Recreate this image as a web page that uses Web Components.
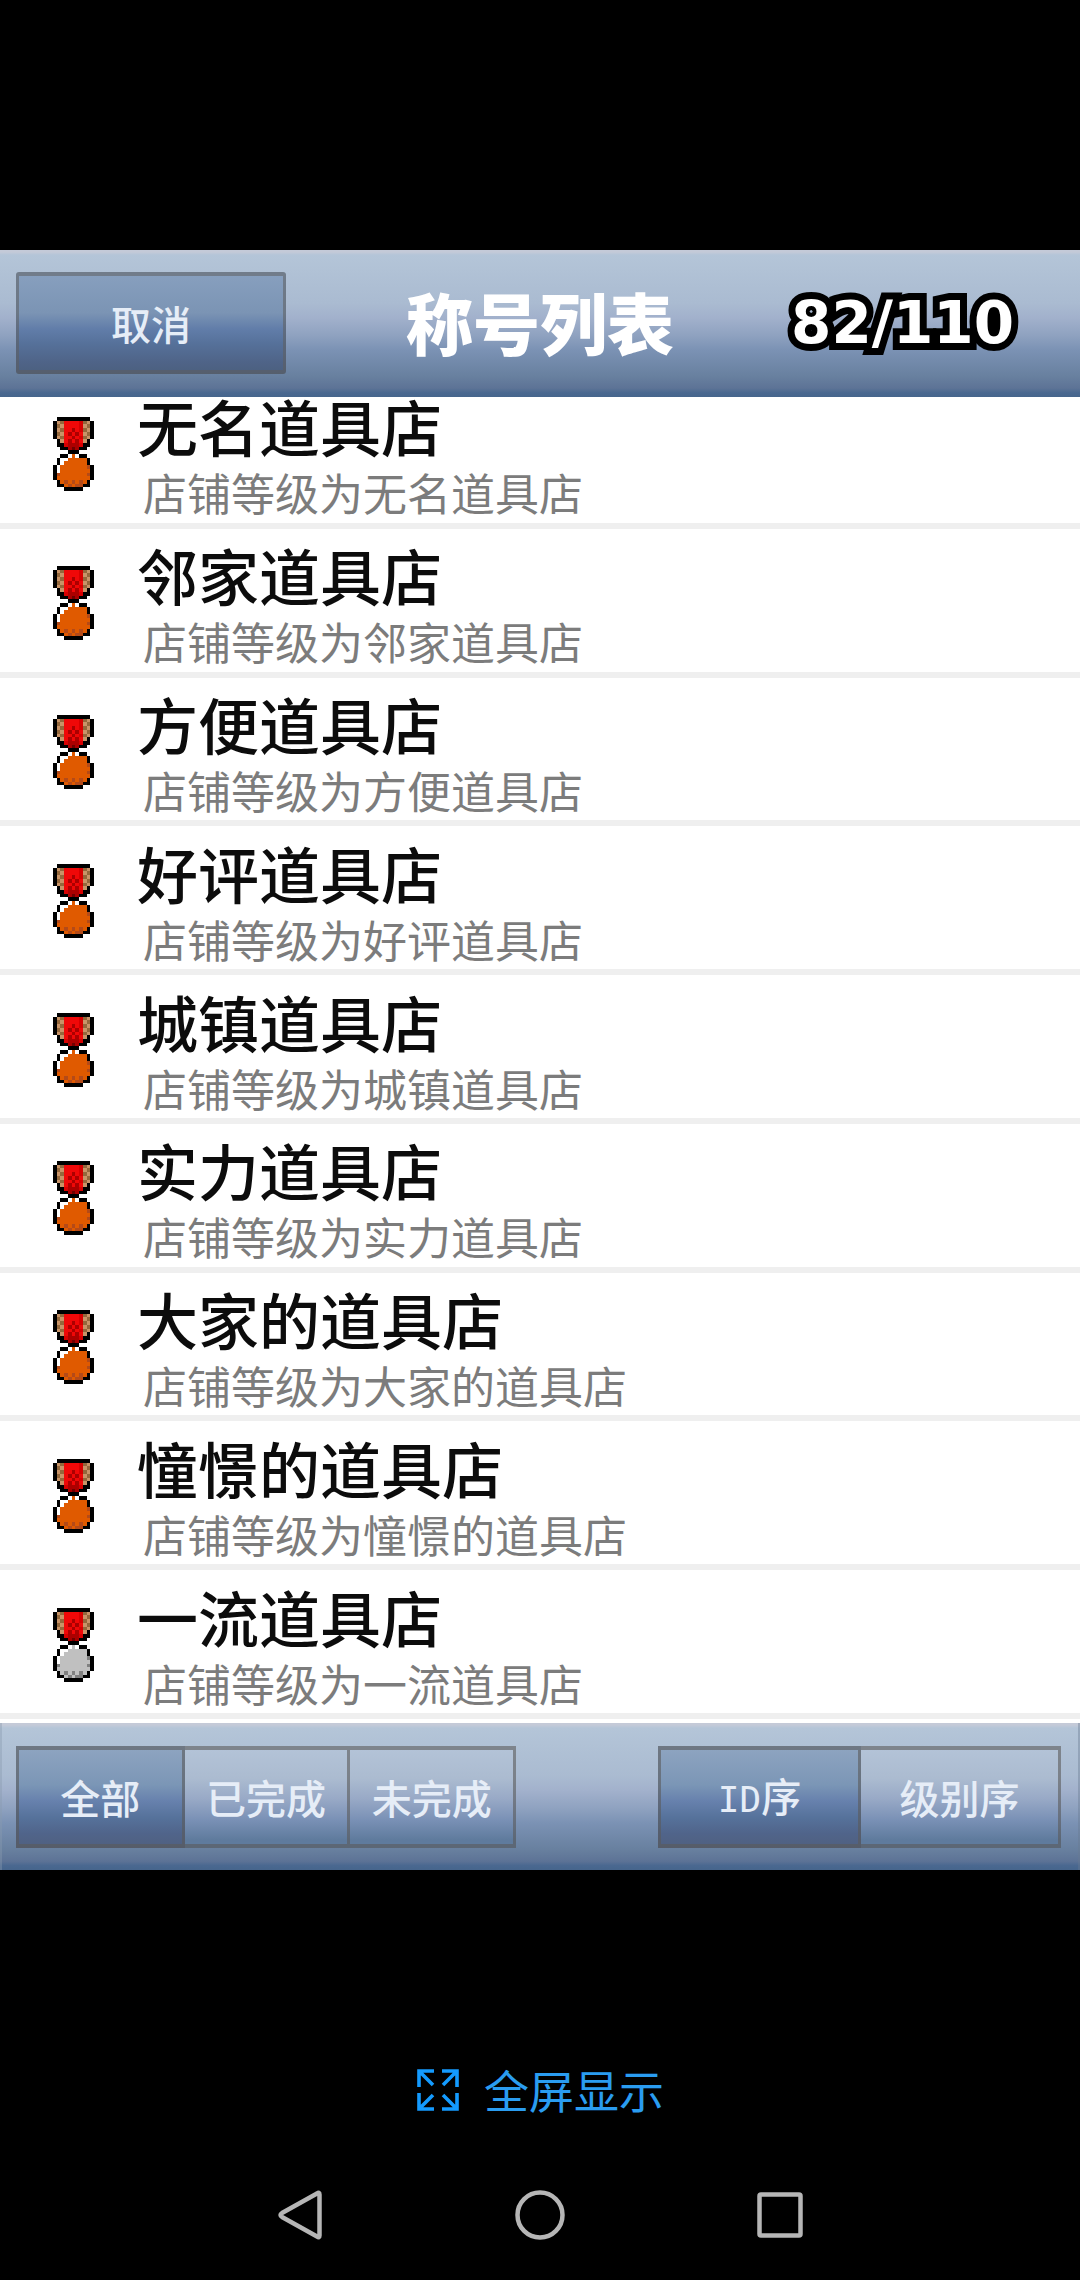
<!DOCTYPE html>
<html lang="zh-CN">
<head>
<meta charset="utf-8">
<meta name="viewport" content="width=device-width, initial-scale=1">
<title>称号列表</title>
<style>
  html, body { margin: 0; height: 100%; background: #000; }
  body { font-family: "Noto Sans CJK SC", "Noto Sans", sans-serif; }
</style>
</head>
<body>
<game-screen>
  <title-bar slot="top" count="82/110">称号列表</title-bar>
  <title-row medal="bronze" name="无名道具店"></title-row>
  <title-row medal="bronze" name="邻家道具店"></title-row>
  <title-row medal="bronze" name="方便道具店"></title-row>
  <title-row medal="bronze" name="好评道具店"></title-row>
  <title-row medal="bronze" name="城镇道具店"></title-row>
  <title-row medal="bronze" name="实力道具店"></title-row>
  <title-row medal="bronze" name="大家的道具店"></title-row>
  <title-row medal="bronze" name="憧憬的道具店"></title-row>
  <title-row medal="silver" name="一流道具店"></title-row>
  <filter-bar slot="bottom"></filter-bar>
  <system-bar slot="system"></system-bar>
</game-screen>

<script>
const BAR = 'linear-gradient(#c4cad8 0 2px, #b4c5d8 5px, #aabbd1 36%, #a2b1cc 46%, #8fa2c0 58%, #7b92b4 68%, #68809f 86%, #5d7396 94%, #4a6890 97%, #46658c)';

const define = (tag, render) => customElements.define(tag, class extends HTMLElement {
  constructor() { super(); this.attachShadow({ mode: 'open' }); }
  connectedCallback() { this.shadowRoot.innerHTML = render(this); }
});

define('game-screen', () => `
  <style>
    :host { display: flex; flex-direction: column; min-height: 100vh; padding-top: 250px; box-sizing: border-box; }
    main { flex: 1; display: flex; flex-direction: column; background: #fff; }
    .list { flex: 1; display: flex; flex-direction: column; overflow: hidden; padding-bottom: 4px; }
    .rows { flex: 1; display: flex; flex-direction: column; margin-top: -17px; }
  </style>
  <main>
    <slot name="top"></slot>
    <div class="list"><div class="rows" role="list"><slot></slot></div></div>
    <slot name="bottom"></slot>
  </main>
  <slot name="system"></slot>`);

define('title-bar', el => `
  <style>
    :host { display: grid; grid-template-columns: 270px 1fr 270px; align-items: center; position: relative; z-index: 1;
            padding: 22px 16px 23px; background: ${BAR}; color: #fff; }
    button { height: 102px; padding: 0; font: 500 40px/60px "Noto Sans CJK SC", sans-serif; color: #e6edf7;
             border: solid rgba(95, 95, 95, .55); border-width: 4px 3px; border-radius: 3px;
             background: linear-gradient(#88a0bf, #7b94b4 40%, #617da9 56%, #56719a 70%, #4f6488 88%, #4b5f7e) border-box; }
    h1 { margin: 0; padding-bottom: 4px; text-align: center; font-size: 67px; line-height: 80px; font-weight: 900; }
    output { justify-self: end; padding-right: 50px; font: bold 58px/80px "DejaVu Sans", sans-serif;
             -webkit-text-stroke: 14px #000; stroke-linejoin: miter; paint-order: stroke fill; }
  </style>
  <button type="button">取消</button>
  <h1><slot></slot></h1>
  <output>${el.getAttribute('count')}</output>`);

/* 11 x 20 pixel sprite */
const SPRITE = [
  '.KKKKKKKKK.',
  'KTBRRRRrBTK',
  'KBTRRRRrTBK',
  'KTBRRDRrBTK',
  'KBTRDRDRTBK',
  'KTBRRDRrBTK',
  '.KTRDRDRTK.',
  '.KKrDDDrKK.',
  '..KKDMDKK..',
  '....KKK....',
  '..KKWOWKK..',
  '.KWWOOOOOK.',
  '.KWOOOOOOK.',
  'KWOOOOOOOPK',
  'KWOOOOOOOOK',
  'KPOOOOOOOPK',
  'KOOOOOOOOOK',
  '.KOPOPOPOK.',
  '.KKOPOPPKK.',
  '...KKKKK...',
];
const BASE = { K: '#000', T: '#c89468', B: '#94683c', R: '#f00808', r: '#d80000', D: '#ac0000', M: '#700000', W: '#fff' };
const METAL = { bronze: { O: '#e05a00', P: '#b44a18' }, silver: { O: '#c0c0c0', P: '#808080' } };

define('medal-icon', el => {
  const colors = { ...BASE, ...METAL[el.getAttribute('metal')] };
  const cells = SPRITE.flatMap((line, y) => [...line].map((c, x) =>
    c === '.' ? '' : `<rect x="${x}" y="${y}" width="1" height="1" fill="${colors[c]}"/>`));
  return `
  <style>:host { display: block; } svg { display: block; width: 41px; height: 74px; }</style>
  <svg viewBox="0 0 11 20" preserveAspectRatio="none" shape-rendering="crispEdges" aria-hidden="true">${cells.join('')}</svg>`;
});

define('title-row', el => `
  <style>
    :host { flex: 1; display: flex; align-items: center; gap: 43px; padding: 6px 0 0 53px; box-sizing: border-box;
            border-bottom: 6px solid #efefef; font-family: "Liberation Sans", "Noto Sans CJK SC", sans-serif; }
    div { padding-top: 10px; }
    h2, p { margin: 0; white-space: nowrap; }
    h2 { font-size: 61px; line-height: 68px; font-weight: 500; color: #0c0c0c; }
    p { font-size: 44px; line-height: 50px; color: #7c7c7c; padding: 6px 0 0 6px; }
  </style>
  <medal-icon metal="${el.getAttribute('medal')}"></medal-icon>
  <div><h2>${el.getAttribute('name')}</h2><p>店铺等级为${el.getAttribute('name')}</p></div>`);

define('filter-bar', () => `
  <style>
    :host { display: flex; justify-content: space-between; padding: 23px 19px 22px 16px; background: ${BAR};
            box-shadow: inset 2px 0 #8a9ab066, inset -2px 0 #6a7a9066; }
    .group { display: flex; box-sizing: border-box; }
    .three { width: 500px; } .two { width: 403px; }
    button { flex: 1; height: 102px; padding: 0; margin: 0; font: 500 40px/60px "Noto Sans CJK SC", sans-serif; color: #e6edf7;
             border: solid rgba(90, 90, 90, .6); border-width: 4px 3px 4px 0; border-radius: 0;
             background: linear-gradient(#b4c4d8, #abbbd0 32%, #98a9c6 52%, #7a91b6 72%, #5f7b9d 92%) border-box; }
    button:first-child { border-left-width: 3px; }
    button[aria-pressed="true"] {
             background: linear-gradient(#8fa5c1, #7b96b6 38%, #6781ad 54%, #56729b 70%, #50648a 86%, #50607f) border-box; }
    span { font-family: "DejaVu Sans Mono", monospace; font-size: 36px; font-weight: 400; }
  </style>
  <div class="group three" role="group" aria-label="筛选">
    <button type="button" aria-pressed="true">全部</button>
    <button type="button" aria-pressed="false">已完成</button>
    <button type="button" aria-pressed="false">未完成</button>
  </div>
  <div class="group two" role="group" aria-label="排序">
    <button type="button" aria-pressed="true"><span>ID</span>序</button>
    <button type="button" aria-pressed="false">级别序</button>
  </div>`);

define('system-bar', () => `
  <style>
    :host { display: flex; flex-direction: column; align-items: center; gap: 55px; padding: 190px 0 25px; }
    button { border: 0; padding: 0; background: none; display: flex; align-items: center; }
    .full { gap: 24px; height: 60px; color: #2a9cf0; font: 400 45px/60px "Noto Sans CJK SC", sans-serif; }
    nav { display: flex; gap: 160px; }
    nav button { width: 80px; height: 80px; justify-content: center; }
    svg { display: block; fill: none; stroke-linejoin: round; }
    nav svg { stroke: #b6b6b6; stroke-width: 4.5; }
  </style>
  <button type="button" class="full">
    <svg width="44" height="44" viewBox="0 0 44 44" stroke="#149bff" stroke-width="3.6" style="stroke-linejoin:miter">
      <path d="M3 19V3H18M3 3L17 17M26 3H41V19M41 3L27 17M3 25V41H18M3 41L17 27M26 41H41V25M41 41L27 27"/>
    </svg>全屏显示
  </button>
  <nav aria-label="系统导航">
    <button type="button" aria-label="返回"><svg width="54" height="54" viewBox="0 0 54 54"><path d="M44 5.500Q46.500 3.500 46.500 6.500V47.500Q46.500 50.500 44 48.500L9 29Q6 27 9 25Z"/></svg></button>
    <button type="button" aria-label="主页"><svg width="54" height="54" viewBox="0 0 54 54"><circle cx="27" cy="27" r="22.500"/></svg></button>
    <button type="button" aria-label="最近任务"><svg width="54" height="54" viewBox="0 0 54 54"><rect x="6.500" y="6.500" width="41" height="41" rx="1.500"/></svg></button>
  </nav>`);
</script>
</body>
</html>
